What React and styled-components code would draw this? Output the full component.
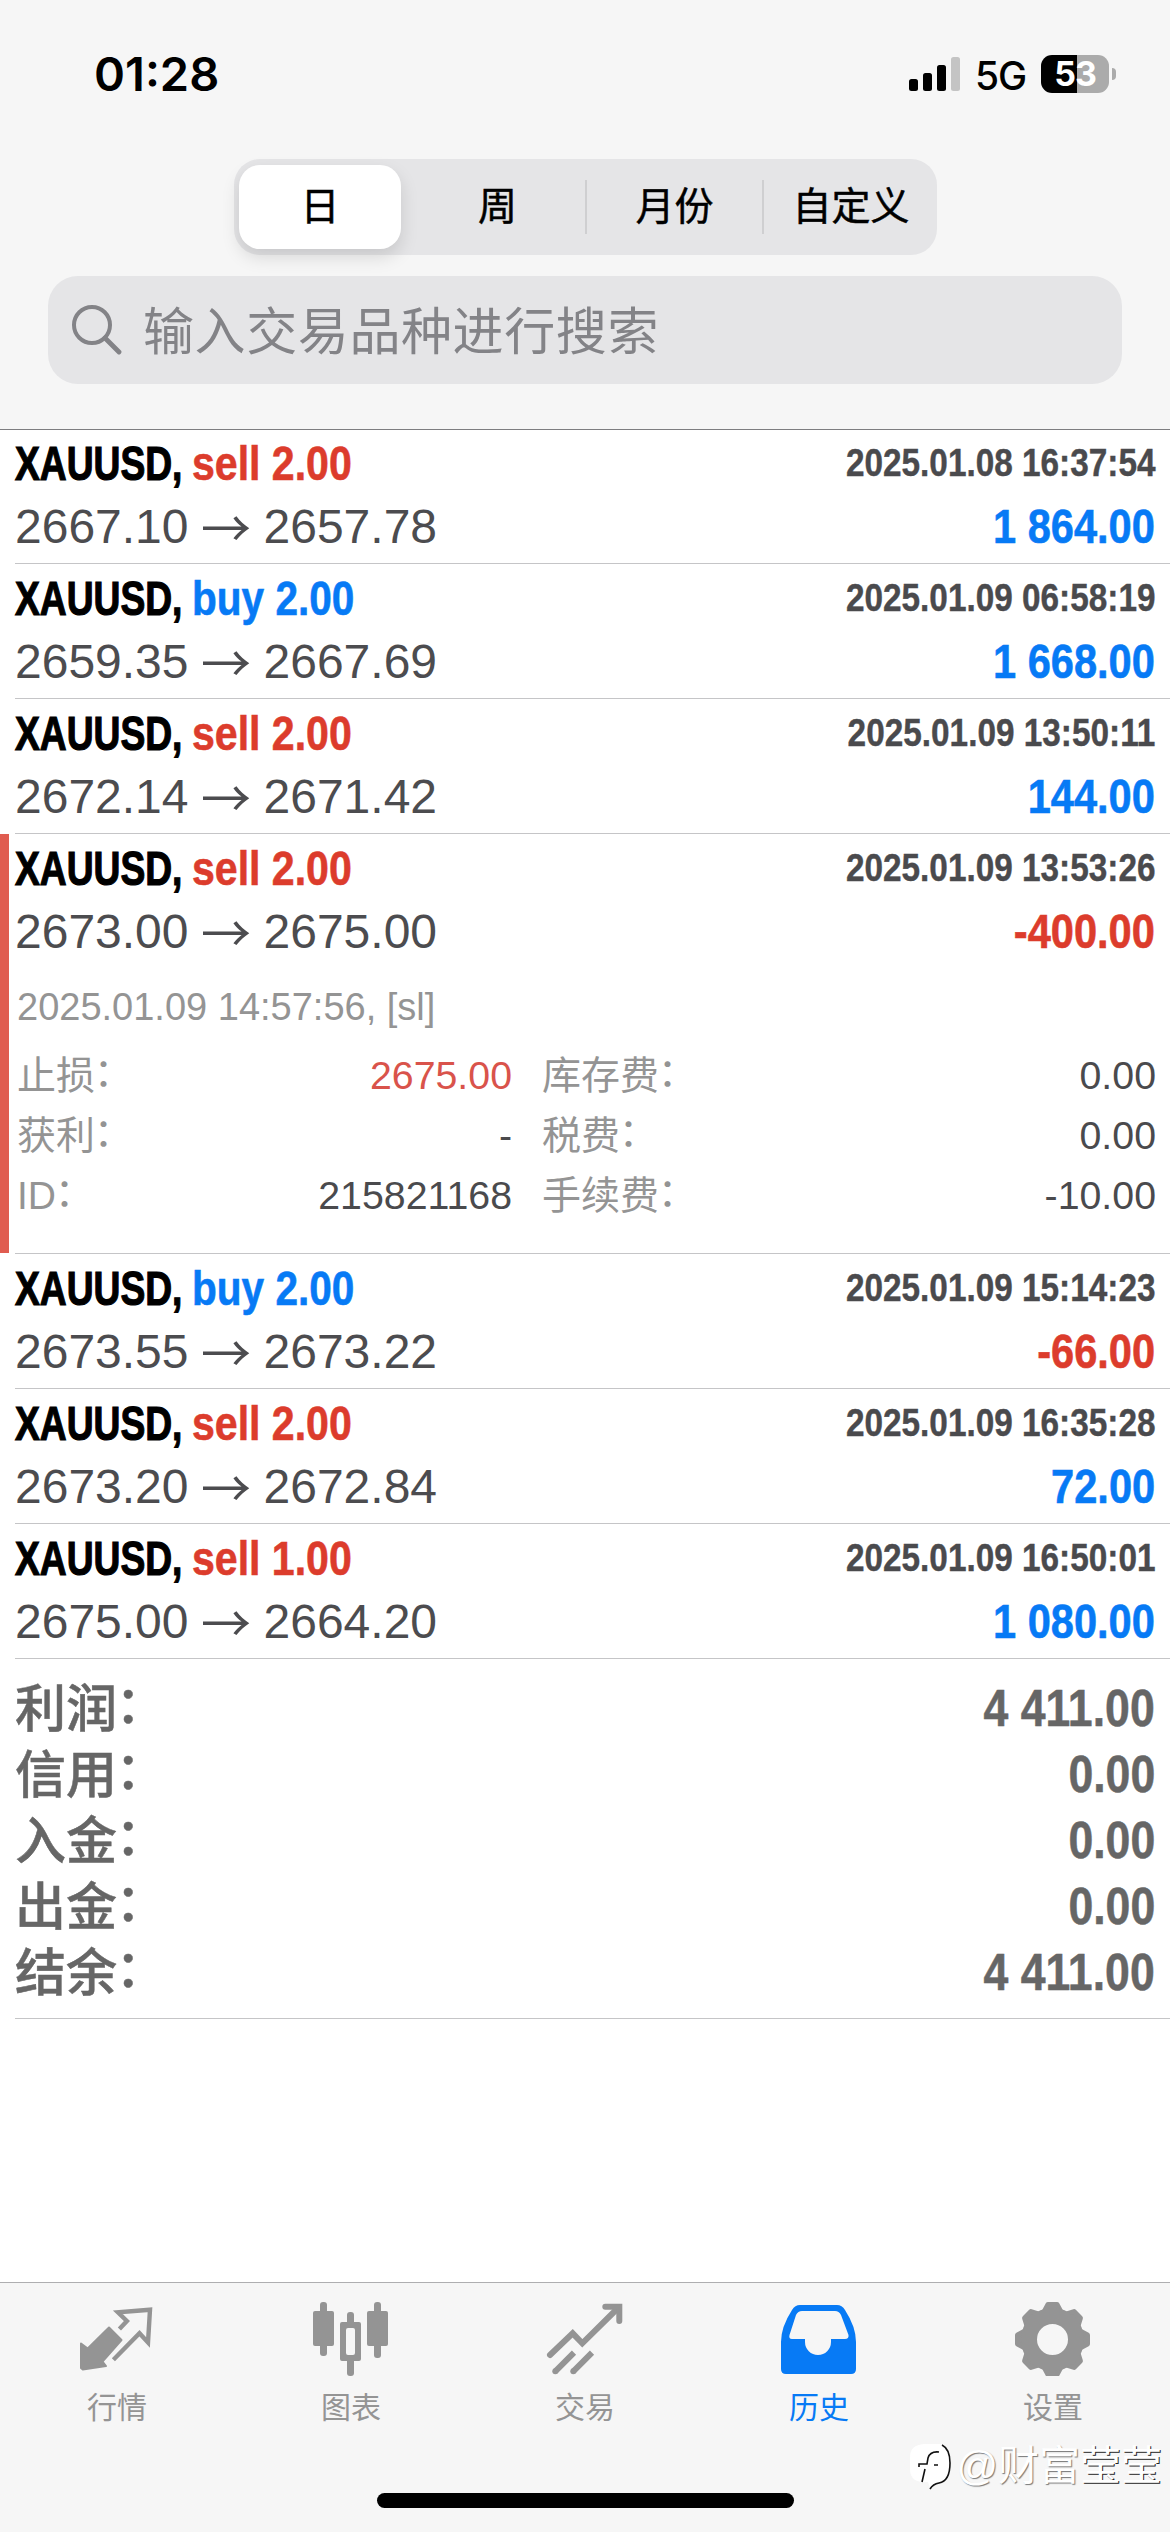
import styled, { createGlobalStyle } from "styled-components";

const GlobalStyle = createGlobalStyle`
  * {
    box-sizing: border-box;
  }

  body {
    margin: 0;
    background: #fff;
    font-family: "Liberation Sans", "Noto Sans CJK SC", sans-serif;
    -webkit-font-smoothing: antialiased;
  }

  p {
    margin: 0;
  }
`;

const RED = "#dc3c2c";
const BLUE = "#077af5";
const GREY = "#949494";

const Screen = styled.div`
  display: flex;
  flex-direction: column;
  width: 1170px;
  height: 2532px;
  overflow: hidden;
  background: #fff;
`;

const Header = styled.header`
  position: relative;
  height: 430px;
  margin-bottom: -1px;
  background: #f6f6f6;
  border-bottom: 1px solid #7d7d80;
`;

const StatusBar = styled.div`
  display: flex;
  align-items: center;
  justify-content: space-between;
  height: 148px;
  padding: 0 54px 0 94px;
`;

const Clock = styled.p`
  font-family: Inter, sans-serif;
  font-size: 47px;
  font-weight: 600;
  line-height: 48px;
  color: #000;
`;

const StatusIcons = styled.div`
  display: flex;
  align-items: center;
`;

const Network = styled.p`
  width: 66px;
  margin-left: 15px;
  font-family: Inter, sans-serif;
  font-size: 39px;
  font-weight: 500;
  line-height: 44px;
  padding-top: 3px;
  color: #000;
  letter-spacing: -1px;
`;

const Battery = styled.div`
  display: flex;
  align-items: center;
  justify-content: center;
  width: 68px;
  height: 38px;
  border-radius: 11px;
  background: linear-gradient(to right, #000 53%, #ababab 53%);
  font-family: Inter, sans-serif;
  font-size: 34px;
  font-weight: 700;
  line-height: 38px;
  color: #fff;
  letter-spacing: -1px;
`;

const BatteryTip = styled.div`
  width: 4px;
  height: 12px;
  margin-left: 3px;
  border-radius: 0 5px 5px 0;
  background: #ababab;
`;

const SegmentedControl = styled.div`
  display: flex;
  width: 703px;
  height: 96px;
  margin: 11px 0 0 234px;
  border-radius: 26px;
  background: #e5e5e7;
`;

const Segment = styled.div`
  flex-shrink: 0;
  display: flex;
  align-items: center;
  justify-content: center;
  width: ${({ $active }) => ($active ? "162px" : "177px")};
  margin: ${({ $active }) => ($active ? "6px 9px 6px 5px" : "21px 0")};
  border-right: ${({ $divider }) => ($divider ? "2px solid #cfcfd1" : "0")};
  border-radius: ${({ $active }) => ($active ? "21px" : "0")};
  background: ${({ $active }) => ($active ? "#fff" : "transparent")};
  box-shadow: ${({ $active }) => ($active ? "0 8px 18px rgba(0, 0, 0, 0.13)" : "none")};
  font-size: 39px;
  line-height: 50px;
  -webkit-text-stroke: 0.5px #000;
  color: #000;

  &:last-child {
    width: 174px;
  }
`;

const SearchField = styled.div`
  display: flex;
  align-items: center;
  width: 1074px;
  height: 108px;
  margin: 21px 0 0 48px;
  padding-left: 22px;
  border-radius: 30px;
  background: #e5e5e7;
`;

const Placeholder = styled.p`
  margin-left: 21px;
  padding-top: 5px;
  font-size: 51px;
  line-height: 60px;
  letter-spacing: 0.6px;
  color: #838387;
`;

const Deal = styled.section`
  position: relative;
  margin-left: 15px;
  height: ${({ $expanded }) => ($expanded ? "420px" : "135px")};
  padding: 3px 15px 0 0;
  border-bottom: 1px solid #c5c5c7;
`;

const DealMarker = styled.div`
  position: absolute;
  left: -15px;
  top: 0;
  width: 9px;
  height: 100%;
  background: #e05c50;
`;

const DealLine = styled.div`
  display: flex;
  justify-content: space-between;
  height: 63px;
  line-height: 63px;
  white-space: nowrap;
`;

const Title = styled.div`
  display: flex;
  font-size: 48px;
  font-weight: 700;
`;

const Symbol = styled.span`
  width: 177px;
  color: #000;
  -webkit-text-stroke: 1.2px #000;
  transform: scaleX(0.775);
  transform-origin: left;
`;

const Volume = styled.span`
  color: ${({ $side }) => ($side === "buy" ? BLUE : RED)};
  -webkit-text-stroke: 0.6px;
  transform: scaleX(${({ $side }) => ($side === "buy" ? 0.845 : 0.855)});
  transform-origin: left;
`;

const OpenTime = styled.span`
  font-size: 38.5px;
  font-weight: 700;
  line-height: 61px;
  color: #4a4a4d;
  -webkit-text-stroke: 0.4px;
  transform: scaleX(0.866);
  transform-origin: right;
`;

const Prices = styled.div`
  display: flex;
  font-size: 48px;
  color: #4c4c4f;
`;

const Arrow = styled.span`
  display: flex;
  justify-content: center;
  width: 75px;
  font-family: "Noto Sans CJK SC", sans-serif;
  font-size: 50px;
  line-height: 61px;
`;

const Amount = styled.span`
  font-size: 48px;
  font-weight: 700;
  color: ${({ $color }) => $color};
  -webkit-text-stroke: 0.6px;
  transform: scaleX(0.866);
  transform-origin: right;
`;

const CloseInfo = styled.p`
  margin: 14px 0 0 2px;
  font-size: 38px;
  line-height: 60px;
  color: ${GREY};
`;

const DetailGrid = styled.div`
  display: grid;
  grid-template-columns: 495px 614px;
  column-gap: 30px;
  margin: 8px 0 0 2px;
`;

const Detail = styled.div`
  display: flex;
  align-items: baseline;
  justify-content: space-between;
  height: 60px;
  line-height: 60px;
`;

const DetailLabel = styled.span`
  font-size: 39px;
  color: ${GREY};
`;

const DetailValue = styled.span`
  font-size: 39.3px;
  color: ${({ $alert }) => ($alert ? "#d9534b" : "#4a4a4d")};
`;

const Colon = styled.span`
  display: inline-block;
  transform: translate(-0.03em, -0.08em);
`;

const Totals = styled.section`
  height: 360px;
  margin-left: 15px;
  padding: 17px 15px 0 0;
  border-bottom: 1px solid #c5c5c7;
`;

const TotalRow = styled.div`
  display: flex;
  align-items: baseline;
  justify-content: space-between;
  height: 66px;
  line-height: 66px;
  font-size: 51px;
  color: #666;
`;

const TotalLabel = styled.span`
  font-weight: 500;
  -webkit-text-stroke: 0.5px;
  transform: translateY(1px);
`;

const TotalAmount = styled.span`
  font-weight: 700;
  -webkit-text-stroke: 0.5px;
  transform: scaleX(0.875);
  transform-origin: right;
`;

const TabBar = styled.nav`
  position: relative;
  display: flex;
  height: 250px;
  margin-top: auto;
  background: #f6f6f6;
  border-top: 1px solid #aeaeb0;
`;

const Tab = styled.div`
  flex: 1;
  display: flex;
  flex-direction: column;
  align-items: center;
  padding-top: 13px;
  font-size: 30px;
  line-height: 44px;
  color: ${({ $active }) => ($active ? BLUE : GREY)};

  svg {
    display: block;
    margin-bottom: 10px;
  }
`;

const HomeIndicator = styled.div`
  position: absolute;
  left: 377px;
  bottom: 24px;
  width: 417px;
  height: 15px;
  border-radius: 8px;
  background: #000;
`;

const Watermark = styled.div`
  position: absolute;
  right: 8px;
  bottom: 41px;
  display: flex;
  align-items: center;
  font-size: 41px;
  line-height: 50px;
  color: #fff;
  text-shadow: 1px 1px 1px #777;
`;

const WatermarkAccent = styled.span`
  text-shadow: 1px 1px 0 #222;
`;

const SignalIcon = () => (
  <svg width="51" height="34" viewBox="0 0 51 34">
    <rect x="0" y="22" width="9" height="12" rx="2.5" />
    <rect x="14" y="16" width="9" height="18" rx="2.5" />
    <rect x="28" y="8" width="9" height="26" rx="2.5" />
    <rect x="42" y="0" width="9" height="34" rx="2.5" fill="#c4c4c4" />
  </svg>
);

const SearchIcon = () => (
  <svg width="52" height="52" viewBox="0 0 52 52" fill="none" stroke="#838387" strokeWidth="4">
    <circle cx="22" cy="21" r="18" />
    <path d="M35 34L49 48" strokeWidth="4.8" strokeLinecap="round" />
  </svg>
);

const QuotesIcon = () => (
  <svg width="80" height="80" viewBox="0 0 80 80">
    <path
      d="M4 47.5L10.7 52.5L32 31.5L44.5 44L25.5 65.5L29 70L5.8 73.5L4 72Z"
      fill="currentColor"
      stroke="currentColor"
      strokeWidth="2"
      strokeLinejoin="round"
    />
    <path
      d="M42.4 33L49.9 25L40.9 16.3L73 13.7L71 46.5L62.5 37.3L36.4 63.7"
      fill="none"
      stroke="currentColor"
      strokeWidth="4.4"
    />
  </svg>
);

const ChartIcon = () => (
  <svg width="80" height="80" viewBox="0 0 80 80" fill="currentColor">
    <rect x="9" y="6" width="7" height="54" rx="3" />
    <rect x="2" y="15" width="21" height="35" rx="2" />
    <rect x="63" y="6" width="7" height="56" rx="3" />
    <rect x="56" y="15" width="21" height="35" rx="2" />
    <rect x="36" y="16" width="7" height="15" rx="3" />
    <rect x="36" y="62" width="7" height="18" rx="3" />
    <path
      fillRule="evenodd"
      d="M31 26H48Q50 26 50 28V63Q50 65 48 65H31Q29 65 29 63V28Q29 26 31 26ZM37 32Q35 32 35 34V57Q35 59 37 59H42Q44 59 44 57V34Q44 32 42 32Z"
    />
  </svg>
);

const TradeIcon = () => (
  <svg width="80" height="80" viewBox="0 0 80 80" fill="none" stroke="currentColor" strokeWidth="6">
    <path d="M5 59L27.7 37.3L37.3 47.3L73 12" strokeLinecap="round" />
    <path d="M60.3 10.7H74.3V25" strokeLinecap="round" />
    <path d="M10.3 75.3L29 56.7M28.3 75.3L47 56.7" />
    <circle cx="10.3" cy="75.3" r="3" fill="currentColor" stroke="none" />
    <circle cx="28.3" cy="75.3" r="3" fill="currentColor" stroke="none" />
  </svg>
);

const HistoryIcon = () => (
  <svg width="80" height="80" viewBox="0 0 80 80" fill="currentColor">
    <path
      fillRule="evenodd"
      d="M21 9H58Q63 9 66 14Q77 31 77 46V73Q77 78 72 78H7Q2 78 2 73V46Q2 31 13 14Q16 9 21 9ZM23 15H56Q60 15 62 19L69.5 39Q70 43 66 43H52V46A13 13 0 0 1 26 46V43H13Q9.5 43 10.5 39L17 19Q19 15 23 15Z"
    />
  </svg>
);

const SettingsIcon = () => (
  <svg width="80" height="80" viewBox="0 0 80 80">
    <g fill="currentColor" stroke="currentColor" strokeWidth="5" strokeLinejoin="round">
      {[0, 45, 90, 135, 180, 225, 270, 315].map((angle) => (
        <path key={angle} d="M31 16L35 8.5H44L48 16Z" transform={`rotate(${angle} 39.5 43.5)`} />
      ))}
    </g>
    <circle cx="39.5" cy="43.5" r="23.5" fill="none" stroke="currentColor" strokeWidth="16" />
  </svg>
);

const WatermarkLogo = () => (
  <svg width="48" height="50" viewBox="0 0 48 50" fill="none">
    <path d="M16 3H31Q42 4 42 20V28Q41 40 30 41Q25 43 22 47L20 41H14Q2 40 2 28V16Q2 4 16 3Z" fill="#fff" />
    <path d="M34 4Q42 8 42 22Q42 40 31 42Q25 43 22 48" stroke="#111" strokeWidth="1.6" />
    <path d="M31 11Q22 10 20 17L19 23H11V26M17 28L14 41M26 24H30" stroke="#111" strokeWidth="1.6" />
  </svg>
);

const periods = ["日", "周", "月份", "自定义"];

const deals = [
  { side: "sell", volume: "2.00", time: "2025.01.08 16:37:54", open: "2667.10", close: "2657.78", profit: "1 864.00" },
  { side: "buy", volume: "2.00", time: "2025.01.09 06:58:19", open: "2659.35", close: "2667.69", profit: "1 668.00" },
  { side: "sell", volume: "2.00", time: "2025.01.09 13:50:11", open: "2672.14", close: "2671.42", profit: "144.00" },
  {
    side: "sell",
    volume: "2.00",
    time: "2025.01.09 13:53:26",
    open: "2673.00",
    close: "2675.00",
    profit: "-400.00",
    closeInfo: "2025.01.09 14:57:56, [sl]",
    details: [
      { label: "止损", value: "2675.00", alert: true },
      { label: "库存费", value: "0.00" },
      { label: "获利", value: "-" },
      { label: "税费", value: "0.00" },
      { label: "ID", value: "215821168" },
      { label: "手续费", value: "-10.00" },
    ],
  },
  { side: "buy", volume: "2.00", time: "2025.01.09 15:14:23", open: "2673.55", close: "2673.22", profit: "-66.00" },
  { side: "sell", volume: "2.00", time: "2025.01.09 16:35:28", open: "2673.20", close: "2672.84", profit: "72.00" },
  { side: "sell", volume: "1.00", time: "2025.01.09 16:50:01", open: "2675.00", close: "2664.20", profit: "1 080.00" },
];

const totals = [
  { label: "利润", value: "4 411.00" },
  { label: "信用", value: "0.00" },
  { label: "入金", value: "0.00" },
  { label: "出金", value: "0.00" },
  { label: "结余", value: "4 411.00" },
];

const tabs = [
  { label: "行情", Icon: QuotesIcon },
  { label: "图表", Icon: ChartIcon },
  { label: "交易", Icon: TradeIcon },
  { label: "历史", Icon: HistoryIcon, active: true },
  { label: "设置", Icon: SettingsIcon },
];

const DealRow = (props) => {
  const { side, volume, time, open, close, profit, closeInfo, details } = props;

  return (
    <Deal $expanded={!!details}>
      {details && <DealMarker />}
      <DealLine>
        <Title>
          <Symbol>XAUUSD,</Symbol>
          <Volume $side={side}>
            {side} {volume}
          </Volume>
        </Title>
        <OpenTime>{time}</OpenTime>
      </DealLine>
      <DealLine>
        <Prices>
          <span>{open}</span>
          <Arrow>→</Arrow>
          <span>{close}</span>
        </Prices>
        <Amount $color={profit.startsWith("-") ? RED : BLUE}>{profit}</Amount>
      </DealLine>
      {details && (
        <>
          <CloseInfo>{closeInfo}</CloseInfo>
          <DetailGrid>
            {details.map((item) => (
              <Detail key={item.label}>
                <DetailLabel>
                  {item.label}
                  <Colon>：</Colon>
                </DetailLabel>
                <DetailValue $alert={item.alert}>{item.value}</DetailValue>
              </Detail>
            ))}
          </DetailGrid>
        </>
      )}
    </Deal>
  );
};

const App = () => {
  return (
    <Screen>
      <GlobalStyle />
      <Header>
        <StatusBar>
          <Clock>01:28</Clock>
          <StatusIcons>
            <SignalIcon />
            <Network>5G</Network>
            <Battery>53</Battery>
            <BatteryTip />
          </StatusIcons>
        </StatusBar>
        <SegmentedControl>
          {periods.map((period, i) => (
            <Segment key={period} $active={i === 0} $divider={i === 1 || i === 2}>
              {period}
            </Segment>
          ))}
        </SegmentedControl>
        <SearchField>
          <SearchIcon />
          <Placeholder>输入交易品种进行搜索</Placeholder>
        </SearchField>
      </Header>
      <main>
        {deals.map((deal) => (
          <DealRow key={deal.time} {...deal} />
        ))}
        <Totals>
          {totals.map((total) => (
            <TotalRow key={total.label}>
              <TotalLabel>
                {total.label}
                <Colon>：</Colon>
              </TotalLabel>
              <TotalAmount>{total.value}</TotalAmount>
            </TotalRow>
          ))}
        </Totals>
      </main>
      <TabBar>
        {tabs.map(({ label, Icon, active }) => (
          <Tab key={label} $active={active}>
            <Icon />
            {label}
          </Tab>
        ))}
        <HomeIndicator />
        <Watermark>
          <WatermarkLogo />
          @财富<WatermarkAccent>莹莹</WatermarkAccent>
        </Watermark>
      </TabBar>
    </Screen>
  );
};

export default App;
